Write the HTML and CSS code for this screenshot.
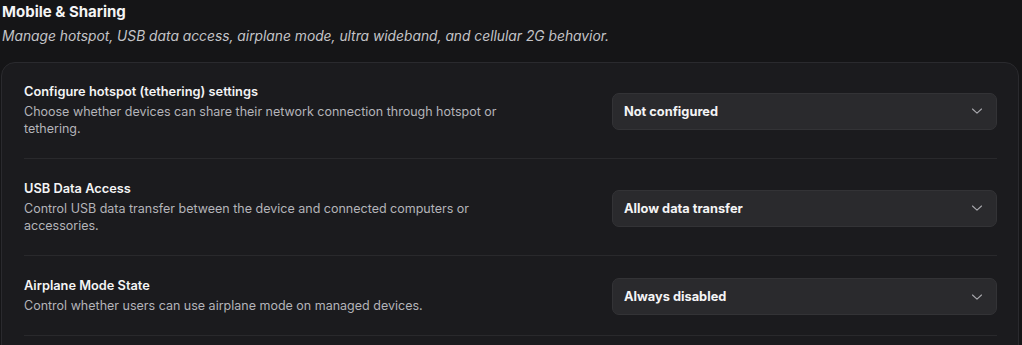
FILE: index.html
```html
<!DOCTYPE html>
<html lang="en">
<head>
<meta charset="utf-8">
<title>Mobile &amp; Sharing</title>
<link rel="stylesheet" href="styles.css">
</head>
<body>
<section class="section">
  <header class="section-head">
    <h2 class="section-title">Mobile &amp; Sharing</h2>
    <p class="section-sub">Manage hotspot, USB data access, airplane mode, ultra wideband, and cellular 2G behavior.</p>
  </header>
  <div class="card">
    <div class="row">
      <div class="row-text">
        <div class="row-title">Configure hotspot (tethering) settings</div>
        <div class="row-desc">Choose whether devices can share their network connection through hotspot or tethering.</div>
      </div>
      <button class="select" type="button">
        <span class="select-value">Not configured</span>
        <svg class="chev" width="12" height="8" viewBox="0 0 12 8"><path d="M1.5 2 L6 6.2 L10.5 2" fill="none" stroke="currentColor" stroke-width="1.1" stroke-linecap="round" stroke-linejoin="round"/></svg>
      </button>
    </div>
    <div class="row">
      <div class="row-text">
        <div class="row-title">USB Data Access</div>
        <div class="row-desc">Control USB data transfer between the device and connected computers or accessories.</div>
      </div>
      <button class="select" type="button">
        <span class="select-value">Allow data transfer</span>
        <svg class="chev" width="12" height="8" viewBox="0 0 12 8"><path d="M1.5 2 L6 6.2 L10.5 2" fill="none" stroke="currentColor" stroke-width="1.1" stroke-linecap="round" stroke-linejoin="round"/></svg>
      </button>
    </div>
    <div class="row">
      <div class="row-text">
        <div class="row-title">Airplane Mode State</div>
        <div class="row-desc">Control whether users can use airplane mode on managed devices.</div>
      </div>
      <button class="select" type="button">
        <span class="select-value">Always disabled</span>
        <svg class="chev" width="12" height="8" viewBox="0 0 12 8"><path d="M1.5 2 L6 6.2 L10.5 2" fill="none" stroke="currentColor" stroke-width="1.1" stroke-linecap="round" stroke-linejoin="round"/></svg>
      </button>
    </div>
  </div>
</section>
</body>
</html>
```
FILE: styles.css
```css
* { box-sizing: border-box; }
html, body { height: 100%; }
body {
  margin: 0;
  padding: 0 3px 0 1px;
  background: #151517;
  color: #ececee;
  font-family: Inter, "Noto Sans", "Liberation Sans", sans-serif;
  overflow: hidden;
}
.section-head { padding: 2px 0 0 1px; }
.section-title {
  margin: 0;
  font-size: 15px;
  font-weight: 700;
  line-height: 20px;
  color: #f4f4f5;
}
.section-sub {
  margin: 5px 0 0;
  font-size: 13.8px;
  font-style: italic;
  line-height: 18px;
  color: #c4c4c8;
}
.card {
  margin-top: 17px;
  background: #1b1b1e;
  border: 1px solid #2a2a2e;
  border-radius: 14px;
  padding: 0 21px 40px 22px;
}
.row {
  display: flex;
  align-items: center;
  justify-content: space-between;
  padding: 21px 0 21px;
  border-bottom: 1px solid #29292c;
}
.row:first-child { padding-top: 20px; }
.row-text { max-width: 520px; }
.row-title {
  font-size: 12.8px;
  font-weight: 600;
  line-height: 17px;
  color: #f4f4f5;
}
.row-desc {
  font-size: 12.5px;
  line-height: 17px;
  color: #b4b4b9;
  margin-top: 3px;
}
.select {
  width: 385px;
  height: 37px;
  margin: 1px 0 -1px;
  display: flex;
  align-items: center;
  justify-content: space-between;
  padding: 0 13px 0 11px;
  background: #2a2a2d;
  border: 1px solid #333336;
  border-radius: 7px;
  color: #f4f4f5;
  font-family: inherit;
  font-size: 12.8px;
  font-weight: 650;
  cursor: pointer;
}
.chev { color: #a8a8ad; }
```
